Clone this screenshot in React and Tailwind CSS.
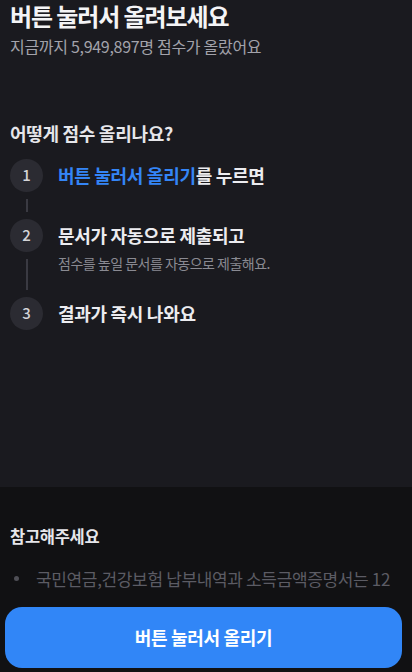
export default function App() {
  const font = { fontFamily: '"Noto Sans CJK KR", "Noto Sans", sans-serif' };
  return (
    <div className="relative h-[672px] overflow-hidden bg-[#111113]" style={font}>
      <section className="h-[487px] bg-[#1a1a1f] px-[10px] pt-[1px]">
        <h1 className="text-[24px] leading-[30px] font-bold tracking-[-1.1px] text-[#f4f4f6]">
          버튼 눌러서 올려보세요
        </h1>
        <p className="mt-[4px] text-[16px] leading-[22px] tracking-[-0.3px] text-[#a3a3ab]">
          지금까지 5,949,897명 점수가 올랐어요
        </p>
        <h2 className="mt-[64px] text-[18px] leading-[24px] font-semibold tracking-[-0.3px] text-[#e6e6ea]">
          어떻게 점수 올리나요?
        </h2>
        <div className="mt-[14px] flex flex-col">
          <div className="flex gap-[15px]">
            <div className="flex w-[33px] flex-col items-center">
              <div className="flex h-[33px] w-[33px] items-center justify-center rounded-full bg-[#2b2b32] text-[15px] font-medium text-[#d4d4d8]">
                1
              </div>
              <div className="my-[7px] w-[2px] flex-1 bg-[#3a3a42]" />
            </div>
            <div className="pb-[27px]">
              <p className="text-[18px] leading-[33px] font-semibold tracking-[-0.3px] text-[#ececf0]">
                <span className="text-[#3485f6]">버튼 눌러서 올리기</span>를 누르면
              </p>
            </div>
          </div>
          <div className="flex gap-[15px]">
            <div className="flex w-[33px] flex-col items-center">
              <div className="flex h-[33px] w-[33px] items-center justify-center rounded-full bg-[#2b2b32] text-[15px] font-medium text-[#d4d4d8]">
                2
              </div>
              <div className="my-[7px] w-[2px] flex-1 bg-[#3a3a42]" />
            </div>
            <div className="pb-[24px]">
              <p className="text-[18px] leading-[33px] font-semibold tracking-[-0.3px] text-[#ececf0]">
                문서가 자동으로 제출되고
              </p>
              <p className="mt-[1px] text-[14px] leading-[20px] tracking-[-0.5px] text-[#8a8a92]">
                점수를 높일 문서를 자동으로 제출해요.
              </p>
            </div>
          </div>
          <div className="flex gap-[15px]">
            <div className="flex w-[33px] flex-col items-center">
              <div className="flex h-[33px] w-[33px] items-center justify-center rounded-full bg-[#2b2b32] text-[15px] font-medium text-[#d4d4d8]">
                3
              </div>
            </div>
            <div>
              <p className="text-[18px] leading-[33px] font-semibold tracking-[-0.3px] text-[#ececf0]">
                결과가 즉시 나와요
              </p>
            </div>
          </div>
        </div>
      </section>
      <section className="px-[10px] pt-[38px]">
        <h3 className="text-[16.5px] leading-[22px] font-semibold tracking-[-0.3px] text-[#e6e6ea]">
          참고해주세요
        </h3>
        <ul className="mt-[18px] flex flex-col gap-[6px]">
          <li className="flex items-start gap-[17px] pl-[4px]">
            <span className="mt-[11px] h-[5px] w-[5px] shrink-0 rounded-full bg-[#4f4f56]" />
            <span className="whitespace-nowrap text-[17px] leading-[27px] tracking-[-0.35px] text-[#5c5c64]">
              국민연금,건강보험 납부내역과 소득금액증명서는 12
            </span>
          </li>
        </ul>
      </section>
      <div className="absolute bottom-0 left-0 right-0 flex flex-col">
        <div className="h-[8px] bg-gradient-to-b from-transparent to-[#111113]" />
        <div className="bg-[#111113] pb-[4px] pl-[5px] pr-[10px] pt-[12px]">
          <button className="flex h-[61px] w-full items-center justify-center rounded-[17px] bg-[#3186f7] text-[18px] font-semibold tracking-[-0.3px] text-white">
            버튼 눌러서 올리기
          </button>
        </div>
      </div>
    </div>
  );
}
